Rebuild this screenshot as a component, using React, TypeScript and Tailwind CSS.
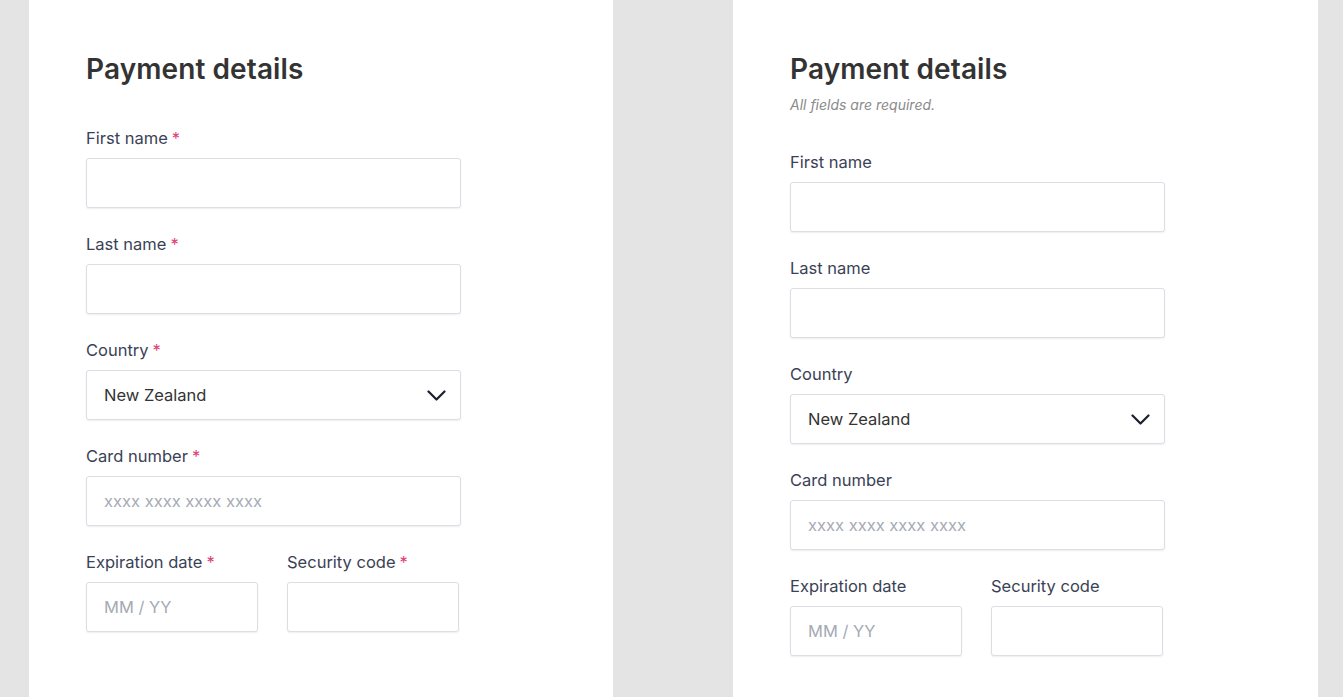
import React from "react";

const Req = () => <span className="text-[#e0407a] ml-1">*</span>;

function Label({ text, req }: { text: string; req: boolean }) {
  return (
    <label className="block text-[16.5px] leading-6 text-[#3a4256] mb-2">
      {text}
      {req && <Req />}
    </label>
  );
}

function Input({ placeholder, w = "w-[375px]" }: { placeholder?: string; w?: string }) {
  return (
    <div
      className={`${w} h-[50px] border border-[#dcdee5] rounded-[3px] bg-white shadow-[0_1px_2px_rgba(0,0,0,0.07)] flex items-center px-[17px] text-[16.5px] text-[#a5aab5]`}
    >
      {placeholder ? <span>{placeholder}</span> : null}
    </div>
  );
}

function Panel({ req, w }: { req: boolean; w: string }) {
  return (
    <div className={`bg-white ${w} min-h-[697px] pl-[57px] pt-[51px]`}>
      <h1 className="text-[28px] leading-9 font-semibold text-[#333333] tracking-[0.1px]">Payment details</h1>
      {!req && (
        <p className="mt-2 text-[14px] leading-5 italic text-[#8a8a8a]">All fields are required.</p>
      )}
      <div className={`flex flex-col gap-6 ${req ? "mt-[39px]" : "mt-[35px]"}`}>
        <div>
          <Label text="First name" req={req} />
          <Input />
        </div>
        <div>
          <Label text="Last name" req={req} />
          <Input />
        </div>
        <div>
          <Label text="Country" req={req} />
          <div className="w-[375px] h-[50px] border border-[#dcdee5] rounded-[3px] bg-white shadow-[0_1px_2px_rgba(0,0,0,0.07)] flex items-center justify-between pl-[17px] pr-[14px] text-[16.5px] text-[#333333]">
            <span>New Zealand</span>
            <svg width="19" height="11" viewBox="0 0 19 11" fill="none" stroke="#1a1f2e" strokeWidth="2.2" strokeLinecap="round" strokeLinejoin="round">
              <path d="M1.5 1.5L9.5 9.5L17.5 1.5" />
            </svg>
          </div>
        </div>
        <div>
          <Label text="Card number" req={req} />
          <Input placeholder="xxxx xxxx xxxx xxxx" />
        </div>
        <div className="flex gap-[29px]">
          <div>
            <Label text="Expiration date" req={req} />
            <Input placeholder="MM / YY" w="w-[172px]" />
          </div>
          <div>
            <Label text="Security code" req={req} />
            <Input w="w-[172px]" />
          </div>
        </div>
      </div>
    </div>
  );
}

export default function App() {
  return (
    <div
      className="w-[1343px] h-[697px] overflow-hidden bg-[#e4e4e4] flex pl-[29px] gap-[120px]"
      style={{ fontFamily: "Inter, 'Noto Sans', sans-serif" }}
    >
      <Panel req={true} w="w-[584px]" />
      <Panel req={false} w="w-[585px]" />
    </div>
  );
}
